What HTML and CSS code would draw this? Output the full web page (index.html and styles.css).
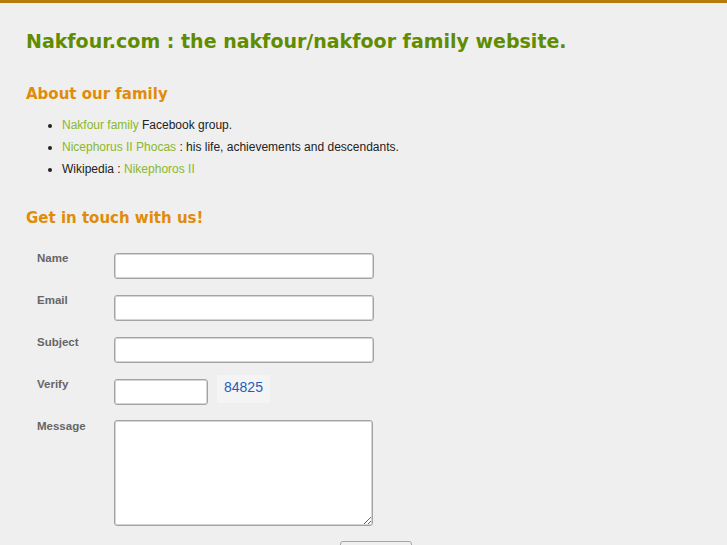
FILE: index.html
```html
<!DOCTYPE html>
<html>
<head>
<meta charset="utf-8">
<link rel="stylesheet" href="styles.css">
</head>
<body>
<div class="topbar"></div>
<div class="page">
  <h1 class="title">Nakfour.com : the nakfour/nakfoor family website.</h1>
  <h2 class="section">About our family</h2>
  <ul class="links">
    <li><a href="#">Nakfour family</a> Facebook group.</li>
    <li><a href="#">Nicephorus II Phocas</a> : his life, achievements and descendants.</li>
    <li>Wikipedia : <a href="#">Nikephoros II</a></li>
  </ul>
  <h2 class="section touch">Get in touch with us!</h2>
  <form class="contact">
    <div class="row"><label class="lbl">Name</label><input class="field" type="text"></div>
    <div class="row"><label class="lbl">Email</label><input class="field" type="text"></div>
    <div class="row"><label class="lbl">Subject</label><input class="field" type="text"></div>
    <div class="row"><label class="lbl">Verify</label><input class="field short" type="text"><span class="captcha">84825</span></div>
    <div class="row"><label class="lbl">Message</label><textarea class="field area"></textarea></div>
    <div class="row submit"><button class="send" type="button"></button></div>
  </form>
</div>
</body>
</html>
```
FILE: styles.css
```css
html, body {
  margin: 0;
  padding: 0;
  background: #efefef;
}
.topbar {
  height: 3px;
  background: #b87a0c;
}
.page {
  padding-left: 26px;
}
.title {
  margin: 26px 0 0 0;
  font-family: "DejaVu Sans", sans-serif;
  font-size: 19px;
  font-weight: bold;
  color: #5f8c00;
  line-height: 24px;
}
.section {
  margin: 31px 0 0 0;
  font-family: "DejaVu Sans", sans-serif;
  font-size: 15px;
  font-weight: bold;
  color: #e08c0a;
  line-height: 20px;
}
.links {
  margin: 10px 0 0 0;
  padding-left: 36px;
  font-family: "Liberation Sans", Arial, sans-serif;
  font-size: 12px;
  color: #222;
  line-height: 22px;
}
.links a {
  color: #8ab82a;
  text-decoration: none;
}
.touch {
  margin-top: 28px;
}
.contact {
  margin-top: 25px;
  padding-left: 11px;
}
.row {
  display: flex;
  align-items: flex-start;
  margin-bottom: 16px;
}
.lbl {
  width: 77px;
  flex: none;
  font-family: "Liberation Sans", Arial, sans-serif;
  font-size: 11.5px;
  font-weight: bold;
  color: #666;
  line-height: 13px;
  padding-top: 0;
  margin-top: -1px;
}
.field {
  box-sizing: border-box;
  width: 260px;
  height: 26px;
  margin: 0;
  background: #fff;
  border: 1px solid #a4a4a4;
  border-radius: 3px;
  box-shadow: inset 0 0 0 1px #d4d4d4;
}
.short {
  width: 94px;
}
.captcha {
  margin-left: 9px;
  margin-top: -4px;
  padding: 3px 7px;
  height: 22px;
  line-height: 18px;
  background: #f4f4f4;
  font-family: "Liberation Sans", Arial, sans-serif;
  font-size: 14px;
  color: #1a5fc0;
}
.area {
  width: 259px;
  height: 106px;
  resize: both;
  margin-top: -1px;
}
.submit {
  padding-left: 303px;
  margin-top: -1px;
}
.send {
  width: 72px;
  height: 26px;
  border: 1px solid #a4a4a4;
  border-radius: 3px;
  background: #f0f0f0;
  font-family: "Liberation Sans", Arial, sans-serif;
  font-size: 12px;
}
```
